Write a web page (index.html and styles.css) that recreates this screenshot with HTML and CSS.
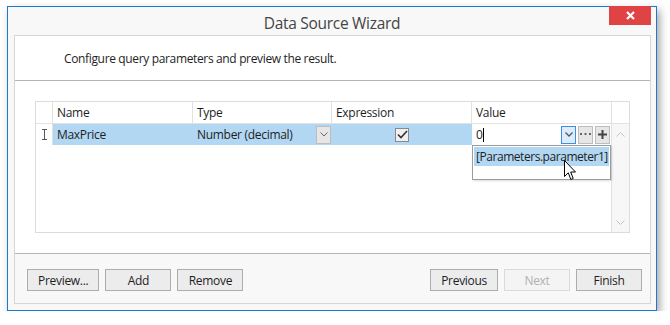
FILE: index.html
```html
<!DOCTYPE html>
<html lang="en">
<head>
  <meta charset="UTF-8">
  <title>Data Source Wizard</title>
  <link rel="stylesheet" href="styles.css">
</head>
<body>
  <div class="window">
    <div class="titlebar">
      <span class="title">Data Source Wizard</span>
      <div class="close">
        <svg width="9" height="9" viewBox="0 0 9 9"><path d="M1 1L8 8M8 1L1 8" stroke="#fff" stroke-width="2.2"/></svg>
      </div>
    </div>

    <div class="frame">
      <div class="header">Configure query parameters and preview the result.</div>

      <div class="content">
        <div class="grid">
          <!-- header row -->
          <div class="cell ind"></div>
          <div class="cell hd">Name</div>
          <div class="cell hd">Type</div>
          <div class="cell hd">Expression</div>
          <div class="cell hd">Value</div>
          <div class="cell sc"></div>

          <!-- data row -->
          <div class="cell ind row">
            <svg width="7" height="11" viewBox="0 0 7 11"><path d="M1 0.5h5M3.5 0.5v10M1 10.5h5" stroke="#555" fill="none"/></svg>
          </div>
          <div class="cell sel">MaxPrice</div>
          <div class="cell sel combo">
            <span>Number (decimal)</span>
            <div class="drop gray">
              <svg width="8" height="5" viewBox="0 0 8 5"><path d="M0.5 0.5L4 4L7.5 0.5" stroke="#666" fill="none"/></svg>
            </div>
          </div>
          <div class="cell sel center">
            <div class="check">
              <svg width="11" height="9" viewBox="0 0 11 9"><path d="M1 4.5L4 7.5L10 1" stroke="#333" stroke-width="1.6" fill="none"/></svg>
            </div>
          </div>
          <div class="cell editor">
            <span class="val">0</span><span class="caret"></span>
            <div class="btns">
              <div class="drop blue">
                <svg width="8" height="5" viewBox="0 0 8 5"><path d="M0.5 0.5L4 4L7.5 0.5" stroke="#555" stroke-width="1.3" fill="none"/></svg>
              </div>
              <div class="drop gray">
                <svg width="11" height="3" viewBox="0 0 11 3"><path d="M0 0h2v2h-2zM4.5 0h2v2h-2zM9 0h2v2h-2z" fill="#666"/></svg>
              </div>
              <div class="drop gray">
                <svg width="9" height="9" viewBox="0 0 9 9"><path d="M4.5 0v9M0 4.5h9" stroke="#444" stroke-width="2"/></svg>
              </div>
            </div>
          </div>
          <div class="scroll">
            <svg width="9" height="5" viewBox="0 0 9 5"><path d="M0.5 4.5L4.5 0.5L8.5 4.5" stroke="#c4c4c4" fill="none"/></svg>
            <svg width="9" height="5" viewBox="0 0 9 5"><path d="M0.5 0.5L4.5 4.5L8.5 0.5" stroke="#c4c4c4" fill="none"/></svg>
          </div>

          <!-- empty area -->
          <div class="empty"></div>

          <div class="popup">
            <div class="item">[Parameters.parameter1]</div>
          </div>
          <svg class="pointer" width="13" height="21" viewBox="0 0 13 21">
            <path d="M0.5 0.5L0.5 16.5L4.3 12.8L6.8 19.5L9.2 18.5L6.7 12L11.5 12Z" fill="#fff" stroke="#000"/>
          </svg>
        </div>
      </div>

      <div class="footer">
        <div class="group">
          <button>Preview...</button>
          <button>Add</button>
          <button>Remove</button>
        </div>
        <div class="group">
          <button>Previous</button>
          <button class="disabled">Next</button>
          <button>Finish</button>
        </div>
      </div>
    </div>
  </div>
</body>
</html>
```

FILE: styles.css
```css
body {
  margin: 0;
  background: #fff;
  font-family: "Open Sans", "Noto Sans", sans-serif;
  font-size: 12px;
  color: #1e1e1e;
}
.window {
  margin: 6px 0 0 7px;
  width: 648px;
  height: 303px;
  border: 1px solid #1b7ad0;
  background: #f8f8f8;
  box-shadow: 3px 4px 8px rgba(0,0,0,0.35);
  display: flex;
  flex-direction: column;
}
.titlebar {
  position: relative;
  height: 28px;
  display: flex;
  justify-content: center;
  align-items: center;
}
.title {
  font-size: 15.5px;
  color: #444;
  margin-top: 4px;
  letter-spacing: -0.3px;
}
.close {
  position: absolute;
  top: -1px;
  right: 5px;
  width: 42px;
  height: 19px;
  background: #e04343;
  display: flex;
  justify-content: center;
  align-items: center;
}
.frame {
  margin: 0 5px 0 6px;
  height: 267px;
  border: 1px solid #d6d6d6;
  display: flex;
  flex-direction: column;
}
.header {
  height: 44px;
  background: #fff;
  border-bottom: 1px solid #b4b4b4;
  padding-left: 49px;
  display: flex;
  align-items: center;
  letter-spacing: -0.35px;
}
.content {
  height: 152px;
  background: #fff;
  border-bottom: 1px solid #b4b4b4;
  padding: 20px 20px 0 20px;
}
.grid {
  position: relative;
  height: 130px;
  border: 1px solid #dcdcdc;
  display: grid;
  grid-template-columns: 17px 140px 139px 140px 140px 1fr;
  grid-template-rows: 22px 21px 1fr;
}
.cell {
  border-right: 1px solid #e2e2e2;
  border-bottom: 1px solid #e2e2e2;
  display: flex;
  align-items: center;
  padding-left: 4px;
  white-space: nowrap;
  letter-spacing: -0.3px;
}
.cell.ind {
  padding-left: 0;
  justify-content: center;
}
.cell.row {
  border-bottom: none;
}
.cell.sc {
  border-right: none;
}
.cell.sel {
  background: #b2d7f2;
  border-right: none;
  border-bottom: none;
}
.cell.center {
  justify-content: center;
  padding-left: 0;
}
.combo {
  justify-content: space-between;
  padding-right: 1px;
}
.check {
  width: 12px;
  height: 12px;
  border: 1px solid #8a8a8a;
  background: #f0f0f0;
  display: flex;
  justify-content: center;
  align-items: center;
}
.editor {
  background: #fff;
  border-bottom: none;
  border-right: 1px solid #e2e2e2;
  padding-right: 1px;
}
.val {
  color: #222;
}
.caret {
  width: 1px;
  height: 14px;
  background: #000;
}
.btns {
  margin-left: auto;
  display: flex;
  gap: 2px;
}
.drop {
  width: 15px;
  height: 18px;
  display: flex;
  justify-content: center;
  align-items: center;
  box-sizing: border-box;
}
.drop.gray {
  background: #e6e6e6;
  border: 1px solid #bdbdbd;
}
.drop.blue {
  background: #dcecfc;
  border: 1px solid #3d8fe0;
}
.scroll {
  grid-column: 6;
  grid-row: 2 / 4;
  background: #f7f7f7;
  display: flex;
  flex-direction: column;
  justify-content: space-between;
  align-items: center;
  padding: 8px 0 7px;
}
.empty {
  grid-column: 1 / 6;
  grid-row: 3;
  border-right: 1px solid #e2e2e2;
}
.popup {
  position: absolute;
  left: 436px;
  top: 43px;
  width: 135px;
  height: 31px;
  background: #fff;
  border: 1px solid #9c9c9c;
  box-shadow: 1px 1px 2px rgba(0,0,0,0.15);
  padding: 1px;
}
.item {
  height: 19px;
  background: #b2d7f2;
  display: flex;
  align-items: center;
  padding-left: 2px;
  letter-spacing: -0.45px;
}
.pointer {
  position: absolute;
  left: 528px;
  top: 58px;
}
.footer {
  flex: 1;
  display: flex;
  justify-content: space-between;
  padding: 15px 8px 0 12px;
}
.group {
  display: flex;
  gap: 6px;
}
button {
  height: 22px;
  min-width: 66px;
  padding: 0 10px;
  font-family: "Open Sans", "Noto Sans", sans-serif;
  font-size: 12px;
  letter-spacing: -0.3px;
  color: #1e1e1e;
  background: #ececec;
  border: 1px solid #adadad;
}
button.disabled {
  color: #b0b0b0;
  background: #f4f4f4;
  border-color: #dadada;
}
```
